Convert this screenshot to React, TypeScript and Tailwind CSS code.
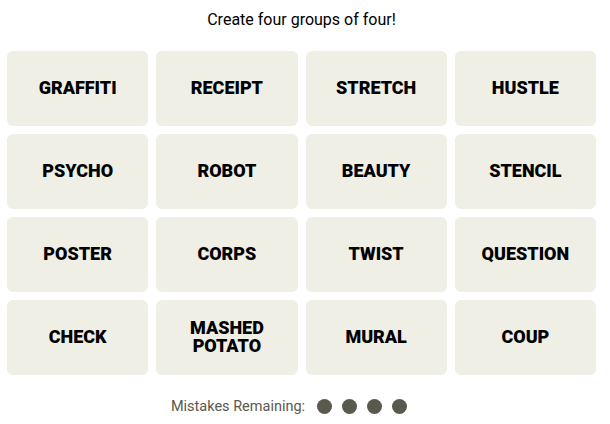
import React from 'react';

const words = [
  'GRAFFITI', 'RECEIPT', 'STRETCH', 'HUSTLE',
  'PSYCHO', 'ROBOT', 'BEAUTY', 'STENCIL',
  'POSTER', 'CORPS', 'TWIST', 'QUESTION',
  'CHECK', 'MASHED POTATO', 'MURAL', 'COUP',
];

const App: React.FC = () => {
  return (
    <div className="w-[603px] h-[424px] bg-white flex flex-col items-center" style={{ fontFamily: 'Roboto, "Liberation Sans", sans-serif' }}>
      <p className="mt-[9px] text-[16px] leading-[22px] text-black">Create four groups of four!</p>

      <div className="mt-[20px] grid grid-cols-4 gap-[8px] w-[589px]">
        {words.map((w) => (
          <div
            key={w}
            className="h-[75px] rounded-[6px] bg-[#efefe6] flex items-center justify-center text-center px-4 pb-[2px]"
          >
            <span className="text-[18px] leading-[18px] font-black text-black uppercase">{w}</span>
          </div>
        ))}
      </div>

      <div className="mt-[21px] mr-[25px] flex items-center gap-[12px]">
        <span className="text-[14.5px] text-[#5a594e]">Mistakes Remaining:</span>
        <div className="flex gap-[10px]">
          <span className="w-[15px] h-[15px] rounded-full bg-[#5a594e]" />
          <span className="w-[15px] h-[15px] rounded-full bg-[#5a594e]" />
          <span className="w-[15px] h-[15px] rounded-full bg-[#5a594e]" />
          <span className="w-[15px] h-[15px] rounded-full bg-[#5a594e]" />
        </div>
      </div>
    </div>
  );
};

export default App;
